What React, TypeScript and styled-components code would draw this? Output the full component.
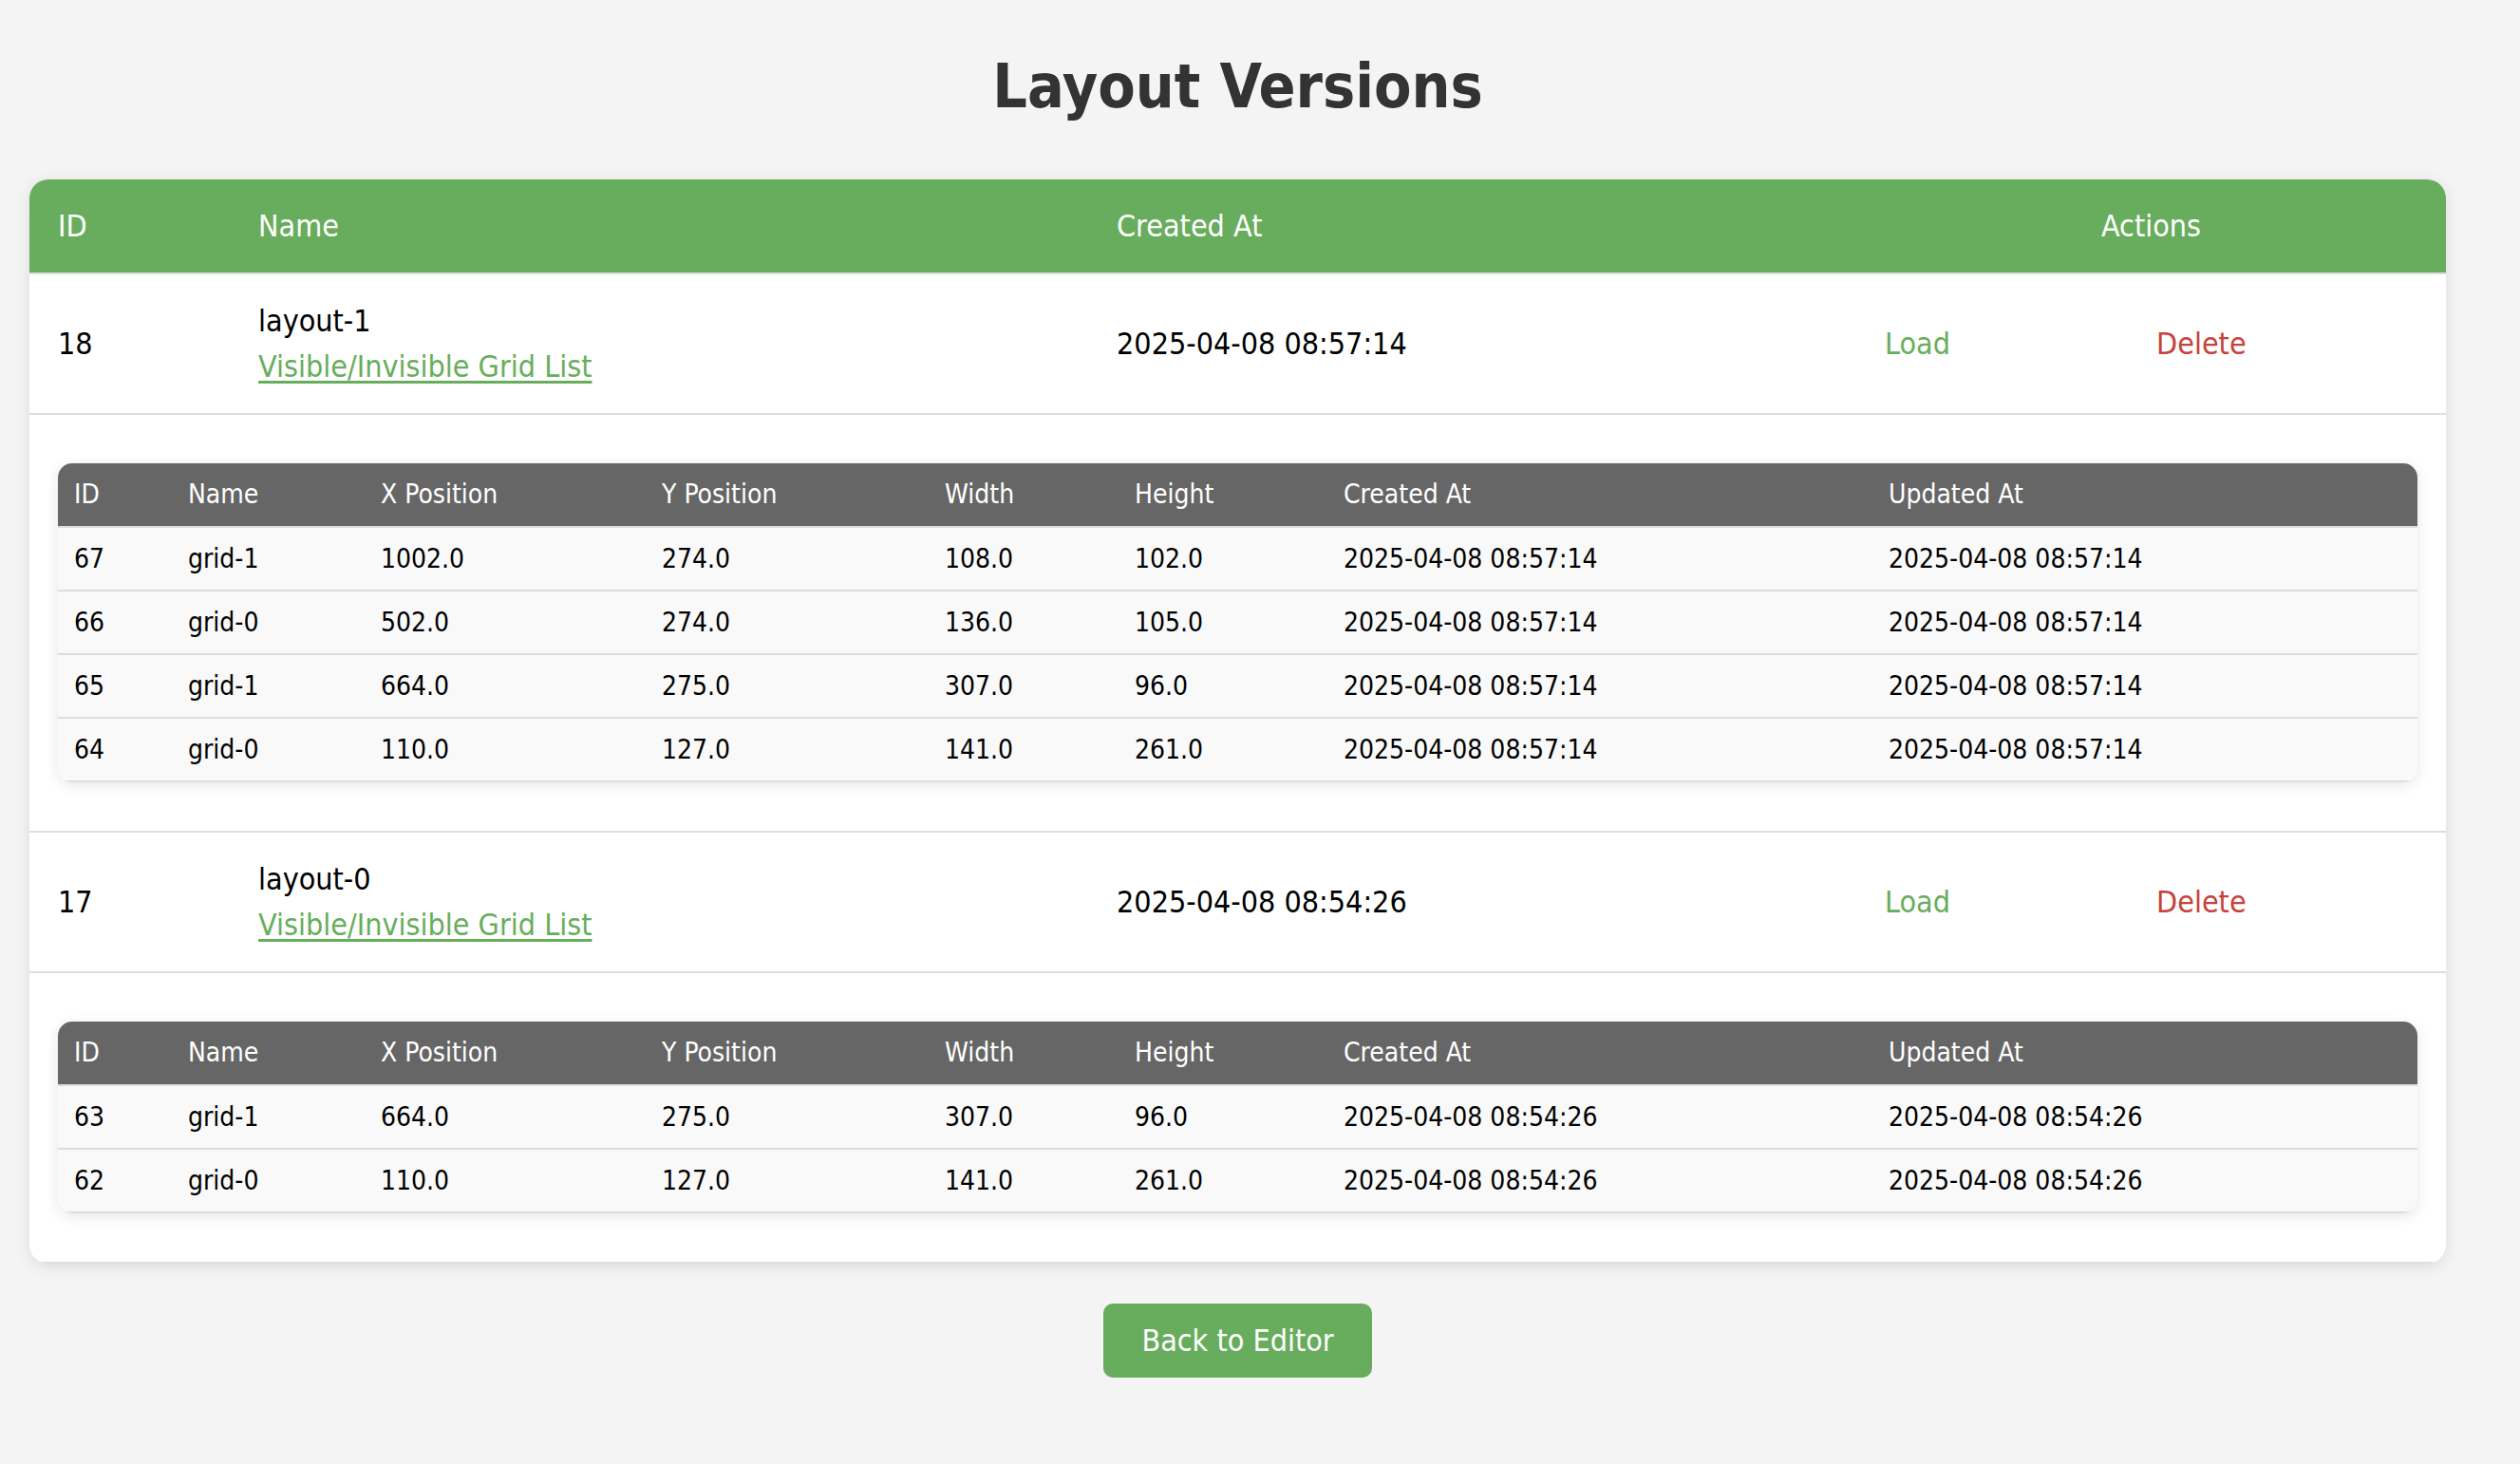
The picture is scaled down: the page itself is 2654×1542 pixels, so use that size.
import styled, { createGlobalStyle } from "styled-components";

interface Grid {
  id: number;
  name: string;
  x: string;
  y: string;
  width: string;
  height: string;
  createdAt: string;
  updatedAt: string;
}

interface Layout {
  id: number;
  name: string;
  createdAt: string;
  grids: Grid[];
}

const grid = (
  id: number,
  name: string,
  x: string,
  y: string,
  width: string,
  height: string,
  stamp: string,
): Grid => ({ id, name, x, y, width, height, createdAt: stamp, updatedAt: stamp });

const layouts: Layout[] = [
  {
    id: 18,
    name: "layout-1",
    createdAt: "2025-04-08 08:57:14",
    grids: [
      grid(67, "grid-1", "1002.0", "274.0", "108.0", "102.0", "2025-04-08 08:57:14"),
      grid(66, "grid-0", "502.0", "274.0", "136.0", "105.0", "2025-04-08 08:57:14"),
      grid(65, "grid-1", "664.0", "275.0", "307.0", "96.0", "2025-04-08 08:57:14"),
      grid(64, "grid-0", "110.0", "127.0", "141.0", "261.0", "2025-04-08 08:57:14"),
    ],
  },
  {
    id: 17,
    name: "layout-0",
    createdAt: "2025-04-08 08:54:26",
    grids: [
      grid(63, "grid-1", "664.0", "275.0", "307.0", "96.0", "2025-04-08 08:54:26"),
      grid(62, "grid-0", "110.0", "127.0", "141.0", "261.0", "2025-04-08 08:54:26"),
    ],
  },
];

const mainColumns = [
  { label: "ID", width: 211 },
  { label: "Name", width: 904 },
  { label: "Created At", width: 809 },
  { label: "Actions", width: 621, center: true },
];

const gridColumns = [
  { label: "ID", width: 120 },
  { label: "Name", width: 203 },
  { label: "X Position", width: 296 },
  { label: "Y Position", width: 298 },
  { label: "Width", width: 200 },
  { label: "Height", width: 220 },
  { label: "Created At", width: 574 },
  { label: "Updated At", width: 574 },
];

function GridTable({ grids }: { grids: Grid[] }) {
  return (
    <SubTable>
      <thead>
        <tr>
          {gridColumns.map((col) => (
            <SubHead key={col.label} $width={col.width}>
              {col.label}
            </SubHead>
          ))}
        </tr>
      </thead>
      <tbody>
        {grids.map((g) => (
          <tr key={g.id}>
            <SubCell>{g.id}</SubCell>
            <SubCell>{g.name}</SubCell>
            <SubCell>{g.x}</SubCell>
            <SubCell>{g.y}</SubCell>
            <SubCell>{g.width}</SubCell>
            <SubCell>{g.height}</SubCell>
            <SubCell>{g.createdAt}</SubCell>
            <SubCell>{g.updatedAt}</SubCell>
          </tr>
        ))}
      </tbody>
    </SubTable>
  );
}

export default function App() {
  return (
    <>
      <GlobalStyle />
      <Page>
        <Title>Layout Versions</Title>

        <Card>
          <MainTable>
            <thead>
              <tr>
                {mainColumns.map((col) => (
                  <HeadCell key={col.label} $width={col.width} $center={col.center}>
                    {col.label}
                  </HeadCell>
                ))}
              </tr>
            </thead>
            <tbody>
              {layouts.map((layout) => (
                <LayoutRows key={layout.id} layout={layout} />
              ))}
            </tbody>
          </MainTable>
        </Card>

        <BackButton>Back to Editor</BackButton>
      </Page>
    </>
  );
}

function LayoutRows({ layout }: { layout: Layout }) {
  return (
    <>
      <tr>
        <Cell>{layout.id}</Cell>
        <Cell>
          <div>{layout.name}</div>
          <GridLink href="#">Visible/Invisible Grid List</GridLink>
        </Cell>
        <Cell>{layout.createdAt}</Cell>
        <Cell>
          <Actions>
            <ActionButton $tone="load">Load</ActionButton>
            <ActionButton $tone="delete">Delete</ActionButton>
          </Actions>
        </Cell>
      </tr>
      <tr>
        <NestedCell colSpan={4}>
          <GridTable grids={layout.grids} />
        </NestedCell>
      </tr>
    </>
  );
}

const GlobalStyle = createGlobalStyle`
  body {
    margin: 0;
    background: #f4f4f4;
    font-family: "DejaVu Sans Condensed", "DejaVu Sans", sans-serif;
    font-stretch: condensed;
    color: #000;
  }

  th, td {
    box-sizing: border-box;
  }
`;

const Page = styled.div`
  width: 2545px;
  margin-left: 31px;
  padding: 51px 0 80px;
  display: flex;
  flex-direction: column;
  align-items: center;
`;

const Title = styled.h1`
  margin: 0 0 58px;
  font-size: 64px;
  line-height: 80px;
  font-weight: bold;
  color: #333;
`;

const Card = styled.div`
  width: 100%;
  background: #fff;
  border-radius: 20px;
  box-shadow: 0 3px 16px rgba(0, 0, 0, 0.1);
  overflow: hidden;
`;

const MainTable = styled.table`
  width: 100%;
  border-collapse: collapse;
  table-layout: fixed;
  font-size: 32px;
`;

const HeadCell = styled.th<{ $width: number; $center?: boolean }>`
  width: ${(p) => p.$width}px;
  padding: 25px 30px;
  line-height: 48px;
  background: #68ad5d;
  color: #fff;
  font-weight: normal;
  text-align: ${(p) => (p.$center ? "center" : "left")};
  border-bottom: 2px solid #ddd;
`;

const Cell = styled.td`
  padding: 25px 30px;
  line-height: 48px;
  vertical-align: middle;
  border-bottom: 2px solid #ddd;
`;

const NestedCell = styled.td`
  padding: 51px 30px;
  border-bottom: 2px solid #ddd;
`;

const GridLink = styled.a`
  display: block;
  color: #67ae5c;
  text-decoration: underline;
  text-underline-offset: 4px;
`;

const Actions = styled.div`
  display: flex;
  gap: 217px;
`;

const ActionButton = styled.button<{ $tone: "load" | "delete" }>`
  padding: 0;
  border: none;
  background: none;
  font: inherit;
  line-height: 48px;
  color: ${(p) => (p.$tone === "load" ? "#67ae5c" : "#c9413a")};
  cursor: pointer;
`;

const SubTable = styled.table`
  width: 100%;
  border-collapse: collapse;
  table-layout: fixed;
  font-size: 28px;
  background: #f9f9f9;
  border-radius: 15px;
  overflow: hidden;
  box-shadow: 0 3px 14px rgba(0, 0, 0, 0.1);
`;

const SubHead = styled.th<{ $width: number }>`
  width: ${(p) => p.$width}px;
  padding: 12px 17px;
  line-height: 42px;
  background: #666;
  color: #fff;
  font-weight: normal;
  text-align: left;
  border-bottom: 2px solid #ddd;
`;

const SubCell = styled.td`
  padding: 12px 17px;
  line-height: 41px;
  border-bottom: 2px solid #ddd;
`;

const BackButton = styled.button`
  margin-top: 42px;
  padding: 15px 40px;
  border: none;
  border-radius: 10px;
  background: #68ad5d;
  color: #fff;
  font: inherit;
  font-size: 32px;
  line-height: 48px;
  cursor: pointer;
`;
